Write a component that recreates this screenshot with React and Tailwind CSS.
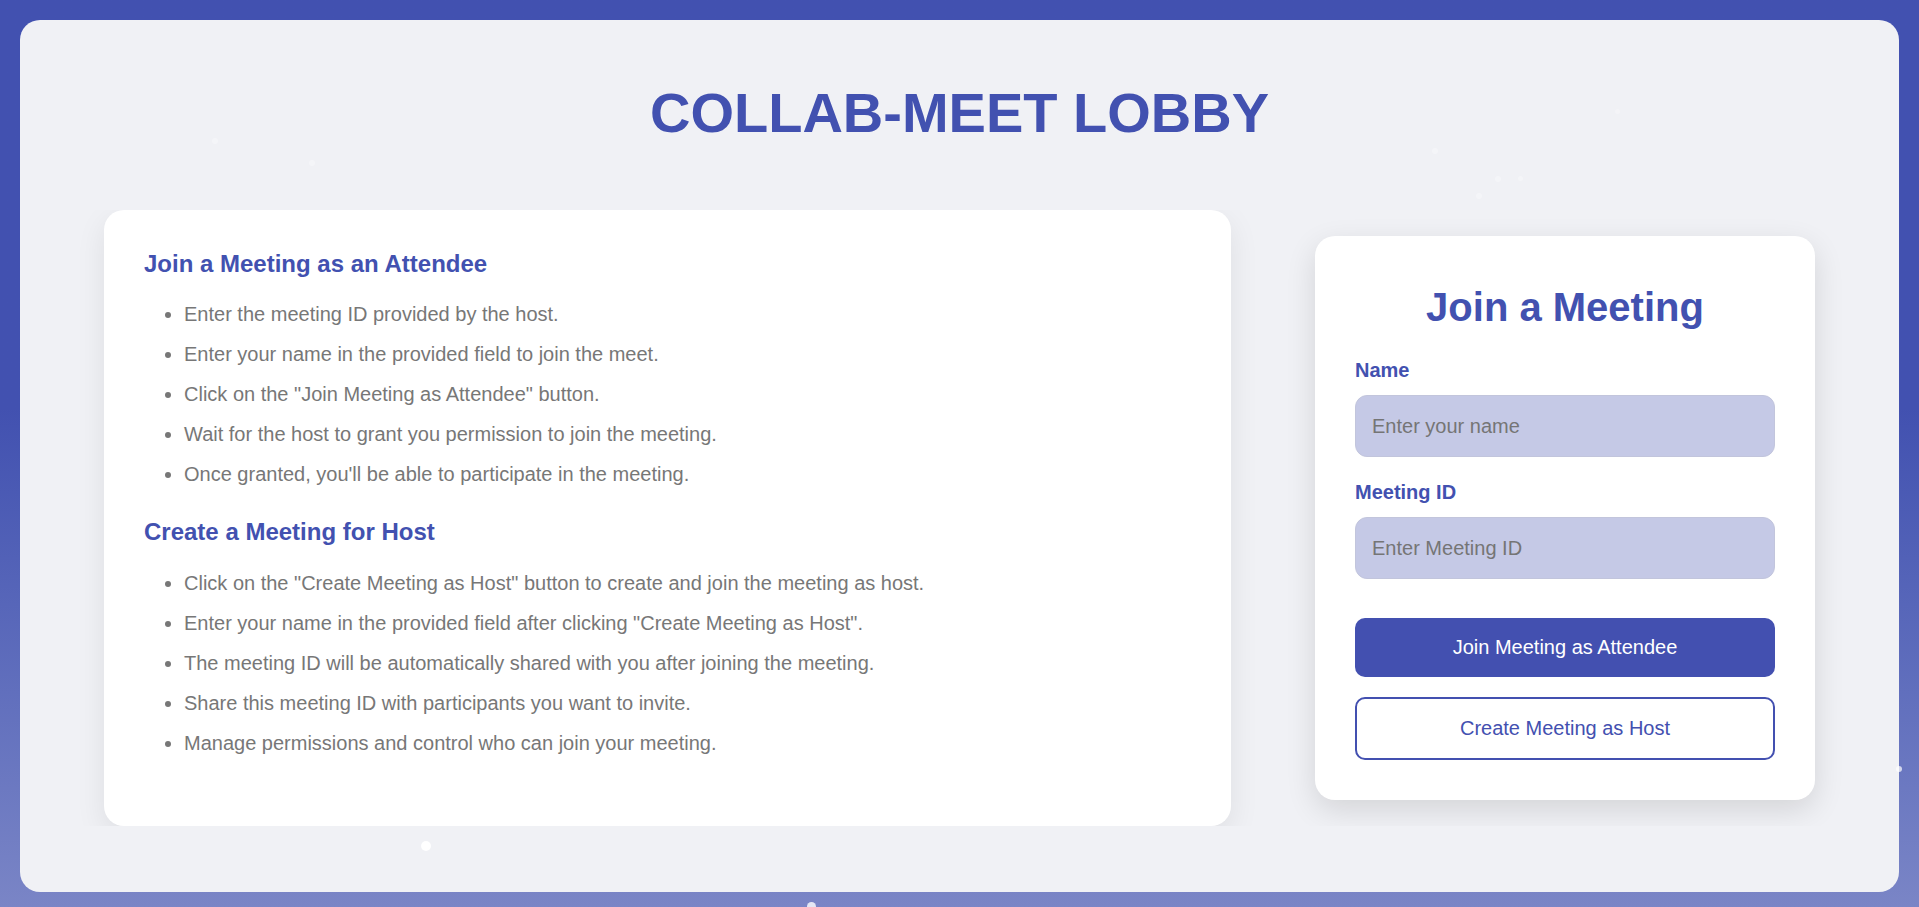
import React from "react";

const attendee = [
  "Enter the meeting ID provided by the host.",
  "Enter your name in the provided field to join the meet.",
  'Click on the "Join Meeting as Attendee" button.',
  "Wait for the host to grant you permission to join the meeting.",
  "Once granted, you'll be able to participate in the meeting.",
];

const host = [
  'Click on the "Create Meeting as Host" button to create and join the meeting as host.',
  'Enter your name in the provided field after clicking "Create Meeting as Host".',
  "The meeting ID will be automatically shared with you after joining the meeting.",
  "Share this meeting ID with participants you want to invite.",
  "Manage permissions and control who can join your meeting.",
];

const dots = [
  { x: 426, y: 846, s: 10, o: 0.95 },
  { x: 811, y: 906, s: 9, o: 0.8 },
  { x: 1899, y: 769, s: 6, o: 0.7 },
  { x: 215, y: 141, s: 6, o: 0.3 },
  { x: 312, y: 163, s: 6, o: 0.3 },
  { x: 1617, y: 111, s: 5, o: 0.25 },
  { x: 1435, y: 151, s: 6, o: 0.3 },
  { x: 1498, y: 179, s: 6, o: 0.3 },
  { x: 1520, y: 178, s: 5, o: 0.3 },
  { x: 1479, y: 196, s: 6, o: 0.3 },
];

function List({ items }) {
  return (
    <ul className="list-disc pl-10 flex flex-col gap-[17px] text-[20px] leading-[23px] text-[#777777] marker:text-[#777777]">
      {items.map((t) => (
        <li key={t}>{t}</li>
      ))}
    </ul>
  );
}

export default function App() {
  return (
    <div
      className="relative w-full h-[907px] overflow-hidden bg-gradient-to-b from-[#4251b0] from-45% to-[#7a85c6] pt-5 px-5 pb-[15px]"
      style={{ fontFamily: '"Liberation Sans", Arial, sans-serif' }}
    >
      <div className="bg-[#f0f1f5] rounded-[20px] h-[872px] pt-[61px] flex flex-col">
        <h1 className="text-center text-[56px] leading-[64px] font-bold text-[#4251b0]">
          COLLAB-MEET LOBBY
        </h1>
        <div className="mt-[65px] overflow-hidden flex items-center justify-between px-[84px]">
          <div className="w-[1127px] bg-white rounded-[20px] shadow-[0_10px_30px_rgba(0,0,0,0.08)] pt-10 px-10 pb-[71px]">
            <h3 className="text-[24px] leading-[28px] font-bold text-[#4251b0]">
              Join a Meeting as an Attendee
            </h3>
            <div className="mt-[25px]">
              <List items={attendee} />
            </div>
            <h3 className="mt-[32px] text-[24px] leading-[28px] font-bold text-[#4251b0]">
              Create a Meeting for Host
            </h3>
            <div className="mt-[26px]">
              <List items={host} />
            </div>
          </div>
          <div className="w-[500px] bg-white rounded-[20px] shadow-[0_10px_30px_rgba(0,0,0,0.12)] pt-[48px] px-10 pb-10 flex flex-col">
            <h2 className="text-center text-[40px] leading-[46px] font-bold text-[#4251b0]">
              Join a Meeting
            </h2>
            <label className="mt-[29px] text-[20px] leading-[23px] font-bold text-[#4251b0]">
              Name
            </label>
            <input
              className="mt-[13px] h-[62px] rounded-[12px] bg-[#c5c9e6] border border-[#c2c5dc] px-4 text-[20px] text-[#444] placeholder:text-[#757575] outline-none"
              placeholder="Enter your name"
              style={{ fontFamily: '"Liberation Sans", Arial, sans-serif' }}
            />
            <label className="mt-[24px] text-[20px] leading-[23px] font-bold text-[#4251b0]">
              Meeting ID
            </label>
            <input
              className="mt-[13px] h-[62px] rounded-[12px] bg-[#c5c9e6] border border-[#c2c5dc] px-4 text-[20px] text-[#444] placeholder:text-[#757575] outline-none"
              placeholder="Enter Meeting ID"
              style={{ fontFamily: '"Liberation Sans", Arial, sans-serif' }}
            />
            <button className="mt-[39px] rounded-[10px] bg-[#4350b0] text-white text-[20px] leading-[23px] py-[18px]">
              Join Meeting as Attendee
            </button>
            <button className="mt-[20px] rounded-[10px] bg-white border-2 border-[#4350b0] text-[#4350b0] text-[20px] leading-[23px] py-[18px]">
              Create Meeting as Host
            </button>
          </div>
        </div>
      </div>
      {dots.map((d, i) => (
        <span
          key={i}
          className="absolute rounded-full bg-white"
          style={{
            left: d.x - d.s / 2,
            top: d.y - d.s / 2,
            width: d.s,
            height: d.s,
            opacity: d.o,
          }}
        />
      ))}
    </div>
  );
}
